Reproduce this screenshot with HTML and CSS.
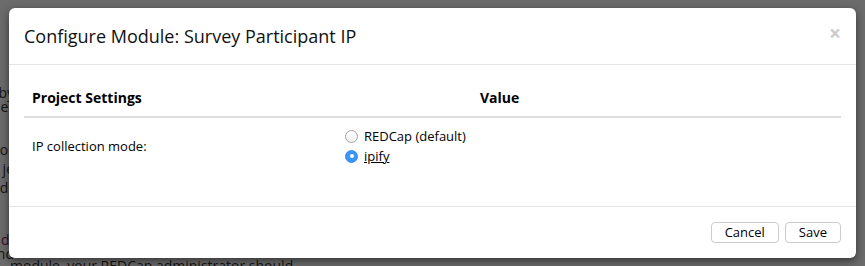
FILE: index.html
```html
<!DOCTYPE html>
<html lang="en">

<head>
    <meta charset="UTF-8" />
    <meta name="viewport" content="width=device-width, initial-scale=1.0" />
    <title>Configure Module</title>
    <link rel="stylesheet" href="styles.css">
</head>

<body>
    <div class="page">
        <div class="edge">
            <p class="line">by</p>
            <p class="line">er</p>
            <p class="line l-or">or</p>
            <p class="line l-next">je</p>
            <p class="line l-next">dr</p>
            <p class="line l-link">d-</p>
            <p class="line l-tight">nd</p>
        </div>
        <p class="tail">module, your REDCap administrator should</p>
    </div>
    <div class="backdrop"></div>

    <div class="modal">
        <div class="modal-header">
            <h4 class="modal-title">Configure Module: Survey Participant IP</h4>
            <button class="close" type="button">&times;</button>
        </div>

        <div class="modal-body">
            <table class="settings">
                <colgroup>
                    <col class="col-label">
                    <col class="col-gap">
                    <col>
                </colgroup>
                <thead>
                    <tr>
                        <th colspan="2">Project Settings</th>
                        <th>Value</th>
                    </tr>
                </thead>
                <tbody>
                    <tr>
                        <td>IP collection mode:</td>
                        <td colspan="2">
                            <label class="option">
                                <span class="radio"></span>
                                REDCap (default)
                            </label>
                            <label class="option">
                                <span class="radio checked"></span>
                                <a href="#">ipify</a>
                            </label>
                        </td>
                    </tr>
                </tbody>
            </table>
        </div>

        <div class="modal-footer">
            <button class="btn" type="button">Cancel</button>
            <button class="btn" type="button">Save</button>
        </div>
    </div>
</body>

</html>
```

FILE: styles.css
```css
html,
body {
    overflow: hidden;
}

body {
    margin: 0;
    height: 266px;
    font-family: "Open Sans", Arial, sans-serif;
    font-size: 14px;
    color: #000;
    background-color: #fff;
}

/* page behind the dialog, only its edges show */
.page {
    height: 266px;
    overflow: hidden;
    padding-top: 86px;
    box-sizing: border-box;
}

.edge {
    width: 200px;
    margin-left: -186px;
    text-align: right;
}

.line {
    margin: 0;
    line-height: 14px;
    white-space: nowrap;
    color: #333;
}

.line.l-or {
    margin-top: 29px;
}

.line.l-next {
    margin-top: 5px;
}

.line.l-link {
    margin-top: 38px;
    color: #8b1f5e;
}

.line.l-tight {
    line-height: 13px;
}

.tail {
    margin: -1px 0 0 10px;
    line-height: 14px;
    white-space: nowrap;
    color: #333;
}

.backdrop {
    position: absolute;
    top: 0;
    left: 0;
    right: 0;
    bottom: 0;
    background-color: rgba(0, 0, 0, 0.58);
}

.modal {
    position: absolute;
    top: 8px;
    left: 9px;
    width: 847px;
    background-color: #fff;
    border-radius: 6px;
    box-shadow: 0 3px 9px rgba(0, 0, 0, 0.5);
}

.modal-header {
    display: flex;
    justify-content: space-between;
    align-items: flex-start;
    padding: 15px;
    border-bottom: 1px solid #e5e5e5;
}

.modal-title {
    margin: 0;
    font-size: 18px;
    font-weight: normal;
    line-height: 26px;
    color: #111;
}

.close {
    margin-top: 0;
    padding: 0;
    border: none;
    background: none;
    font-family: "Open Sans", Arial, sans-serif;
    font-size: 21px;
    font-weight: bold;
    line-height: 1;
    color: #000;
    opacity: 0.2;
    cursor: pointer;
}

.modal-body {
    padding: 15px 15px 32px;
}

.settings {
    width: 100%;
    border-collapse: collapse;
    table-layout: fixed;
}

.col-label {
    width: 313px;
}

.col-gap {
    width: 135px;
}

.settings th {
    padding: 8px;
    text-align: left;
    font-size: 14px;
    line-height: 20px;
    border-bottom: 2px solid #ddd;
}

.settings td {
    padding: 8px;
    font-size: 13px;
    line-height: 20px;
    vertical-align: middle;
}

.option {
    display: flex;
    align-items: center;
    gap: 6px;
    line-height: 20px;
}

.option a {
    color: #000;
}

.radio {
    width: 13px;
    height: 13px;
    box-sizing: border-box;
    border-radius: 50%;
    border: 1px solid #a6a6a6;
    background: linear-gradient(#fff, #f0f0f0);
}

.radio.checked {
    position: relative;
    border-color: #3b8ff0;
    background: #3d95f7;
}

.radio.checked::after {
    content: "";
    position: absolute;
    top: 3.5px;
    left: 3.5px;
    width: 4px;
    height: 4px;
    border-radius: 50%;
    background-color: #fff;
}

.modal-footer {
    display: flex;
    justify-content: flex-end;
    gap: 6px;
    padding: 15px;
    border-top: 1px solid #e5e5e5;
}

.btn {
    padding: 1px 13px;
    font-family: "Open Sans", Arial, sans-serif;
    font-size: 13px;
    line-height: 17px;
    color: #000;
    background-color: #fff;
    border: 1px solid #ccc;
    border-radius: 4px;
    cursor: pointer;
}
```
